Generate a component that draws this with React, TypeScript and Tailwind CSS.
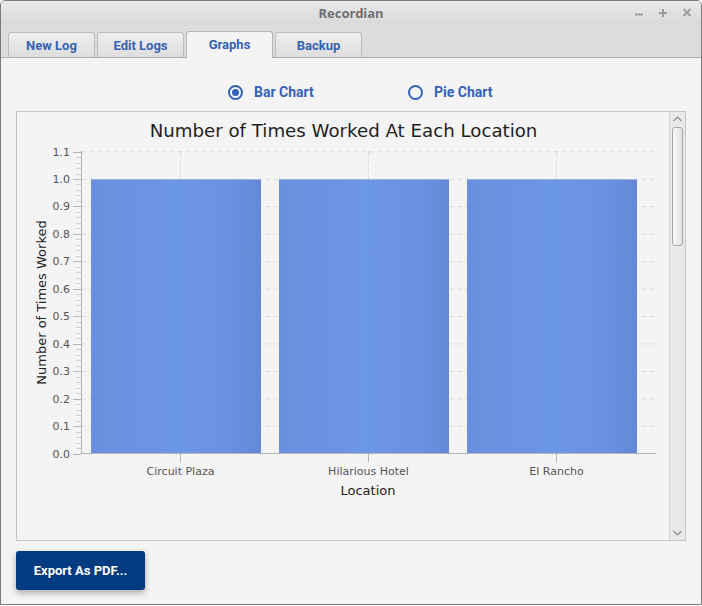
import React from "react";

const TABS = ["New Log", "Edit Logs", "Graphs", "Backup"];
const BARS = [
  { name: "Circuit Plaza", x: 91, tick: 180.5 },
  { name: "Hilarious Hotel", x: 279, tick: 368.5 },
  { name: "El Rancho", x: 467, tick: 556.5 },
];

const y0 = 453.5;
const step = 27.45;
const yAt = (v: number) => y0 - v * step;

function Chevron({ up }: { up?: boolean }) {
  return (
    <svg width="9" height="6" viewBox="0 0 9 6">
      <polyline
        points={up ? "0.5,5 4.5,1 8.5,5" : "0.5,1 4.5,5 8.5,1"}
        fill="none"
        stroke="#8c8c8c"
        strokeWidth="1.2"
      />
    </svg>
  );
}

function Chart() {
  const majors = Array.from({ length: 12 }, (_, i) => i);
  const minors: number[] = [];
  for (let i = 0; i < 11; i++) for (let j = 1; j < 5; j++) minors.push(i + j / 5);

  return (
    <svg width="652" height="428" viewBox="17 112 652 428" className="block shrink-0">
      <defs>
        <linearGradient id="bar" x1="0" x2="1" y1="0" y2="0">
          <stop offset="0" stopColor="#6890dd" />
          <stop offset="0.5" stopColor="#6c96e6" />
          <stop offset="0.82" stopColor="#6a92e1" />
          <stop offset="1" stopColor="#6388d6" />
        </linearGradient>
      </defs>

      <text
        x="343.5"
        y="137"
        textAnchor="middle"
        fontFamily="'DejaVu Sans', sans-serif"
        fontSize="18.2"
        fill="#1f1f1f"
      >
        Number of Times Worked At Each Location
      </text>

      {/* grid */}
      {majors.slice(1).map((i) => (
        <line
          key={i}
          x1="81"
          x2="656"
          y1={yAt(i) + 0.25}
          y2={yAt(i) + 0.25}
          stroke="#dcdcdc"
          strokeDasharray="5 3"
        />
      ))}
      {BARS.map((b) => (
        <line
          key={b.name}
          x1={b.tick}
          x2={b.tick}
          y1="151"
          y2="453"
          stroke="#dcdcdc"
          strokeDasharray="5 3"
        />
      ))}

      {/* bars */}
      {BARS.map((b) => (
        <g key={b.name}>
          <rect x={b.x} y={yAt(10)} width="170" height={y0 - yAt(10)} fill="url(#bar)" />
          <line x1={b.x} x2={b.x + 170} y1={yAt(10) + 0.5} y2={yAt(10) + 0.5} stroke="#9fb6e4" />
        </g>
      ))}

      {/* y axis */}
      <line x1="81.5" x2="81.5" y1="151" y2="454" stroke="#b4b4b4" />
      {minors.map((v) => (
        <line
          key={v}
          x1="76"
          x2="81"
          y1={Math.round(yAt(v)) + 0.5}
          y2={Math.round(yAt(v)) + 0.5}
          stroke="#d2d2d2"
        />
      ))}
      {majors.map((i) => (
        <g key={i}>
          <line
            x1="73"
            x2="81"
            y1={Math.round(yAt(i)) + 0.5}
            y2={Math.round(yAt(i)) + 0.5}
            stroke="#b4b4b4"
          />
          <text
            x="70"
            y={yAt(i) + 4}
            textAnchor="end"
            fontFamily="'DejaVu Sans', sans-serif"
            fontSize="11"
            fill="#555555"
          >
            {(i / 10).toFixed(1)}
          </text>
        </g>
      ))}
      <text
        transform="translate(46 302.5) rotate(-90)"
        textAnchor="middle"
        fontFamily="'DejaVu Sans', sans-serif"
        fontSize="13"
        fill="#222222"
      >
        Number of Times Worked
      </text>

      {/* x axis */}
      <line x1="81" x2="656" y1={y0} y2={y0} stroke="#b4b4b4" />
      {BARS.map((b) => (
        <g key={b.name}>
          <line x1={b.tick} x2={b.tick} y1="454" y2="462" stroke="#b4b4b4" />
          <text
            x={b.tick}
            y="475"
            textAnchor="middle"
            fontFamily="'DejaVu Sans', sans-serif"
            fontSize="11"
            fill="#555555"
          >
            {b.name}
          </text>
        </g>
      ))}
      <text
        x="368"
        y="495"
        textAnchor="middle"
        fontFamily="'DejaVu Sans', sans-serif"
        fontSize="13"
        fill="#222222"
      >
        Location
      </text>
    </svg>
  );
}

function Radio({ label, checked }: { label: string; checked?: boolean }) {
  return (
    <div className="flex items-center gap-[11px]">
      <span className="w-[15px] h-[15px] rounded-full border-2 border-[#3462b4] flex items-center justify-center">
        {checked && <span className="w-[7px] h-[7px] rounded-full bg-[#3462b4]" />}
      </span>
      <span className="text-[14px] font-bold text-[#3462b4]">{label}</span>
    </div>
  );
}

export default function App() {
  return (
    <div className="w-[702px] h-[605px] flex flex-col bg-[#f4f4f4] border border-[#7c7c7c] rounded-t-[5px] overflow-hidden font-['Roboto',sans-serif]">
      {/* title bar */}
      <div className="h-[24px] shrink-0 relative flex items-center justify-center pt-[1px] bg-gradient-to-b from-[#e9e9e9] to-[#d9d9d9]">
        <span className="font-['Noto_Sans',sans-serif] text-[13px] font-bold text-[#6f6f6f] leading-none">
          Recordian
        </span>
        <div className="absolute right-[9px] top-0 h-full flex items-center gap-[14px]">
          <svg width="10" height="10" viewBox="0 0 10 10">
            <line x1="1" x2="9" y1="6.5" y2="6.5" stroke="#9c9c9c" strokeWidth="2" />
          </svg>
          <svg width="10" height="10" viewBox="0 0 10 10">
            <line x1="1" x2="9" y1="5" y2="5" stroke="#9c9c9c" strokeWidth="2" />
            <line x1="5" x2="5" y1="1" y2="9" stroke="#9c9c9c" strokeWidth="2" />
          </svg>
          <svg width="10" height="10" viewBox="0 0 10 10">
            <line x1="1.5" x2="8.5" y1="1" y2="8" stroke="#9c9c9c" strokeWidth="2" />
            <line x1="8.5" x2="1.5" y1="1" y2="8" stroke="#9c9c9c" strokeWidth="2" />
          </svg>
        </div>
      </div>

      {/* tabs */}
      <div className="h-[33px] shrink-0 flex items-end gap-[2px] pl-[7px] bg-[#dcdcdc] border-b border-[#ababab]">
        {TABS.map((t) =>
          t === "Graphs" ? (
            <div
              key={t}
              className="relative -mb-px w-[87px] h-[27px] pb-[1px] flex items-center justify-center bg-[#f4f4f4] border border-b-0 border-[#b4b4b4] rounded-t-[3px] text-[13px] font-bold text-[#3462b4]"
            >
              {t}
            </div>
          ) : (
            <div
              key={t}
              className="w-[87px] h-[25px] pt-[1px] flex items-center justify-center bg-gradient-to-b from-[#eeeeee] to-[#dedede] border border-b-0 border-[#bcbcbc] rounded-t-[3px] text-[13px] font-bold text-[#3462b4]"
            >
              {t}
            </div>
          )
        )}
      </div>

      {/* content */}
      <div className="flex flex-col px-[15px]">
        <div className="mt-[19px] h-[30px] flex items-center pl-[212px]">
          <div className="w-[180px]">
            <Radio label="Bar Chart" checked />
          </div>
          <Radio label="Pie Chart" />
        </div>

        <div className="mt-[4px] h-[430px] flex border border-[#c6c6c6] bg-[#f4f4f4]">
          <Chart />
          <div className="w-[16px] flex flex-col bg-[#e9e9e9] border-l border-[#d6d6d6]">
            <div className="h-[14px] flex items-center justify-center">
              <Chevron up />
            </div>
            <div className="mt-[1px] mx-[2px] h-[119px] rounded-[3px] border border-[#a6a6a6] bg-gradient-to-r from-[#fafafa] to-[#e2e2e2]" />
            <div className="flex-1" />
            <div className="h-[14px] flex items-center justify-center">
              <Chevron />
            </div>
          </div>
        </div>

        <button className="mt-[10px] w-[129px] h-[39px] rounded-[3px] bg-[#033b80] text-white text-[13px] font-bold shadow-[0_3px_6px_rgba(0,0,0,0.3)]">
          Export As PDF...
        </button>
      </div>
    </div>
  );
}
